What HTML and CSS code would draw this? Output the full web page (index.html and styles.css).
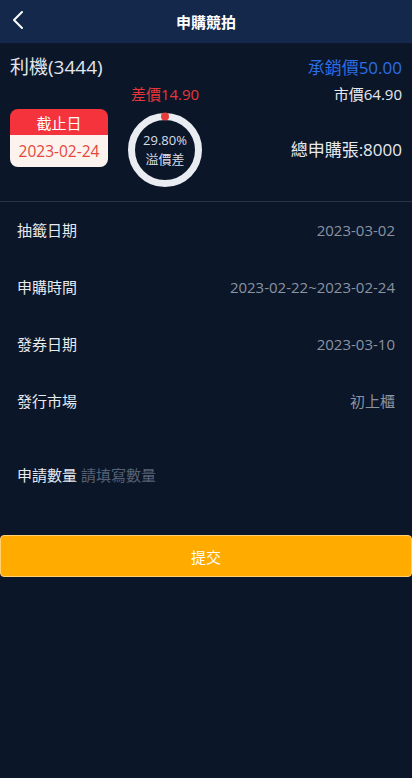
FILE: index.html
```html
<!DOCTYPE html>
<html lang="zh-Hant">
<head>
<meta charset="utf-8">
<meta name="viewport" content="width=device-width, initial-scale=1">
<title>申購競拍</title>
<link rel="stylesheet" href="styles.css">
</head>
<body>
<div class="page">
  <header class="topbar">
    <span class="back">
      <svg width="14" height="20" viewBox="0 0 14 20"><polyline points="11,2 3,10 11,18" fill="none" stroke="#ffffff" stroke-width="2" stroke-linecap="round" stroke-linejoin="round"/></svg>
    </span>
    <h1 class="title">申購競拍</h1>
  </header>

  <section class="summary">
    <div class="row-top">
      <span class="stock-name">利機(3444)</span>
      <span class="underwrite">承銷價50.00</span>
    </div>
    <div class="stats">
      <span class="diff">差價14.90</span>
      <span class="market">市價64.90</span>
      <div class="deadline">
        <div class="deadline-head">截止日</div>
        <div class="deadline-date">2023-02-24</div>
      </div>
      <div class="ring">
        <svg class="ring-svg" width="76" height="76" viewBox="0 0 76 76">
          <circle cx="38" cy="38" r="33.5" fill="none" stroke="#e9ecf0" stroke-width="7"/>
          <circle cx="38" cy="4.5" r="4" fill="#ea3b3b"/>
        </svg>
        <div class="ring-text">
          <span>29.80%</span>
          <span>溢價差</span>
        </div>
      </div>
      <span class="total">總申購張:8000</span>
    </div>
  </section>

  <ul class="info">
    <li class="info-row"><span class="label">抽籤日期</span><span class="value">2023-03-02</span></li>
    <li class="info-row"><span class="label">申購時間</span><span class="value">2023-02-22~2023-02-24</span></li>
    <li class="info-row"><span class="label">發券日期</span><span class="value">2023-03-10</span></li>
    <li class="info-row"><span class="label">發行市場</span><span class="value">初上櫃</span></li>
  </ul>

  <div class="apply">
    <label class="label" for="qty">申請數量</label>
    <input id="qty" class="qty" type="text" placeholder="請填寫數量">
  </div>

  <button class="submit" type="button">提交</button>
</div>
</body>
</html>
```

FILE: styles.css
```css
* { box-sizing: border-box; }
html, body {
  margin: 0;
  padding: 0;
  background: #0b1629;
}
body {
  font-family: "Open Sans", "Noto Sans CJK TC", sans-serif;
  color: #e6e9ee;
}
.page {
  width: 412px;
  min-height: 778px;
  background: #0b1629;
}
.topbar {
  position: relative;
  height: 43px;
  background: #13284a;
  display: flex;
  align-items: center;
  justify-content: center;
}
.back {
  position: absolute;
  left: 11px;
  top: 10px;
  width: 14px;
  height: 20px;
  display: flex;
}
.title {
  margin: 0;
  font-size: 15px;
  font-weight: 700;
  color: #ffffff;
  line-height: 20px;
}
.summary {
  padding: 12px 10px 13px;
  border-bottom: 1px solid #27344a;
}
.row-top {
  display: flex;
  justify-content: space-between;
  align-items: center;
  height: 24px;
}
.stock-name {
  font-size: 19px;
  color: #e2e6ec;
  line-height: 24px;
}
.underwrite {
  font-size: 17px;
  color: #2c6ee6;
  line-height: 24px;
  position: relative;
  top: 1px;
}
.stats {
  margin-top: 5px;
  display: grid;
  grid-template-columns: 98px 76px 1fr;
  column-gap: 19px;
  grid-template-rows: 20px auto;
  row-gap: 5px;
}
.diff {
  grid-column: 2;
  grid-row: 1;
  justify-self: center;
  font-size: 15px;
  line-height: 20px;
  color: #e8363a;
  white-space: nowrap;
}
.market {
  grid-column: 3;
  grid-row: 1;
  justify-self: end;
  font-size: 15px;
  line-height: 20px;
  color: #e6e9ee;
}
.deadline {
  grid-column: 1;
  grid-row: 2;
  align-self: start;
  height: 58px;
  border-radius: 8px;
  overflow: hidden;
  display: flex;
  flex-direction: column;
}
.deadline-head {
  height: 26px;
  background: #f4333c;
  color: #ffffff;
  font-size: 15px;
  display: flex;
  align-items: center;
  justify-content: center;
}
.deadline-date {
  flex: 1;
  background: #fdf3ee;
  color: #e5463c;
  font-size: 15.5px;
  display: flex;
  align-items: center;
  justify-content: center;
}
.ring {
  grid-column: 2;
  grid-row: 2;
  position: relative;
  width: 76px;
  height: 76px;
  margin-top: 3px;
}
.ring-svg { display: block; }
.ring-text {
  position: absolute;
  inset: 0;
  display: flex;
  flex-direction: column;
  align-items: center;
  justify-content: center;
  gap: 2px;
  font-size: 13px;
  line-height: 17px;
  color: #d8dee8;
}
.total {
  grid-column: 3;
  grid-row: 2;
  justify-self: end;
  align-self: center;
  font-size: 17px;
  color: #e6e9ee;
}
.info {
  list-style: none;
  margin: 0;
  padding: 0;
}
.info-row {
  height: 57px;
  padding: 0 17px 2px;
  display: flex;
  justify-content: space-between;
  align-items: center;
}
.label {
  font-size: 15px;
  color: #e6e9ee;
}
.value {
  font-size: 15px;
  color: #8a93a1;
}
.apply {
  margin-top: 17px;
  height: 57px;
  padding: 0 17px 2px;
  display: flex;
  align-items: center;
  gap: 4px;
}
.qty {
  flex: 1;
  border: none;
  outline: none;
  background: transparent;
  padding: 0;
  font-family: "Open Sans", "Noto Sans CJK TC", sans-serif;
  font-size: 15px;
  color: #e6e9ee;
}
.qty::placeholder { color: #566174; }
.submit {
  display: block;
  margin-top: 31px;
  width: 412px;
  height: 42px;
  background: #ffab00;
  border: 1px solid #ffcf70;
  border-radius: 4px;
  color: #ffffff;
  font-family: "Open Sans", "Noto Sans CJK TC", sans-serif;
  font-size: 15px;
  cursor: pointer;
}
```
